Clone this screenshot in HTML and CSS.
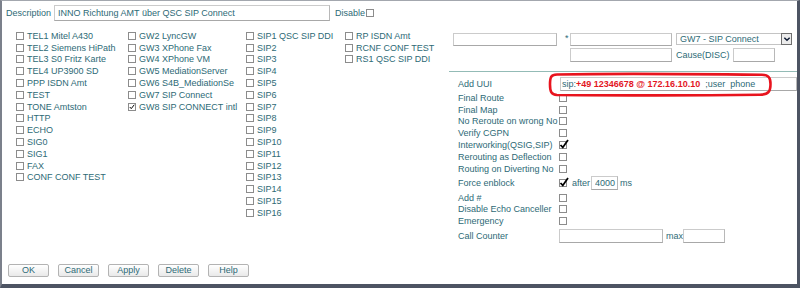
FILE: index.html
```html
<!DOCTYPE html>
<html lang="de">
<head>
    <meta charset="UTF-8">
    <title>Route</title>
    <link rel="stylesheet" href="styles.css">
</head>
<body>
    <div class="frame">
        <div class="desc-row">
            <span>Description</span>
            <input class="txt desc-input" value="INNO Richtung AMT über QSC SIP Connect">
            <span>Disable</span><span class="cb"></span>
        </div>

        <div class="main">
            <div class="gw-grid">
                <ul class="gw-col">
                    <li><span class="cb"></span>TEL1 Mitel A430</li>
                    <li><span class="cb"></span>TEL2 Siemens HiPath</li>
                    <li><span class="cb"></span>TEL3 S0 Fritz Karte</li>
                    <li><span class="cb"></span>TEL4 UP3900 SD</li>
                    <li><span class="cb"></span>PPP ISDN Amt</li>
                    <li><span class="cb"></span>TEST</li>
                    <li><span class="cb"></span>TONE Amtston</li>
                    <li><span class="cb"></span>HTTP</li>
                    <li><span class="cb"></span>ECHO</li>
                    <li><span class="cb"></span>SIG0</li>
                    <li><span class="cb"></span>SIG1</li>
                    <li><span class="cb"></span>FAX</li>
                    <li><span class="cb"></span>CONF CONF TEST</li>
                </ul>
                <ul class="gw-col">
                    <li><span class="cb"></span>GW2 LyncGW</li>
                    <li><span class="cb"></span>GW3 XPhone Fax</li>
                    <li><span class="cb"></span>GW4 XPhone VM</li>
                    <li><span class="cb"></span>GW5 MediationServer</li>
                    <li><span class="cb"></span>GW6 S4B_MediationSe</li>
                    <li><span class="cb"></span>GW7 SIP Connect</li>
                    <li><span class="cb small-on"><svg viewBox="0 0 8 8"><path d="M1 4 L3 6.2 L7 1"/></svg></span>GW8 SIP CONNECT intl</li>
                </ul>
                <ul class="gw-col">
                    <li><span class="cb"></span>SIP1 QSC SIP DDI</li>
                    <li><span class="cb"></span>SIP2</li>
                    <li><span class="cb"></span>SIP3</li>
                    <li><span class="cb"></span>SIP4</li>
                    <li><span class="cb"></span>SIP5</li>
                    <li><span class="cb"></span>SIP6</li>
                    <li><span class="cb"></span>SIP7</li>
                    <li><span class="cb"></span>SIP8</li>
                    <li><span class="cb"></span>SIP9</li>
                    <li><span class="cb"></span>SIP10</li>
                    <li><span class="cb"></span>SIP11</li>
                    <li><span class="cb"></span>SIP12</li>
                    <li><span class="cb"></span>SIP13</li>
                    <li><span class="cb"></span>SIP14</li>
                    <li><span class="cb"></span>SIP15</li>
                    <li><span class="cb"></span>SIP16</li>
                </ul>
                <ul class="gw-col">
                    <li><span class="cb"></span>RP ISDN Amt</li>
                    <li><span class="cb"></span>RCNF CONF TEST</li>
                    <li><span class="cb"></span>RS1 QSC SIP DDI</li>
                </ul>
            </div>

            <div class="panel">
                <div class="top-row1">
                    <input class="txt num-a">
                    <span class="star">*</span>
                    <input class="txt num-b">
                    <div class="sel">
                        <span>GW7 - SIP Connect</span>
                        <span class="sel-btn"><svg viewBox="0 0 9 9"><path d="M1.5 3 L4.5 6 L7.5 3"/></svg></span>
                    </div>
                </div>
                <div class="top-row2">
                    <input class="txt num-b">
                    <span class="cause">Cause(DISC)</span>
                    <input class="txt cause-in">
                </div>
                <div class="divider"></div>

                <div class="form">
                    <div class="frow uui-row">
                        <span class="lbl">Add UUI</span>
                        <div class="txt uui">sip:<b>+49 12346678 @ 172.16.10.10</b>&nbsp; ;user&nbsp; phone</div>
                    </div>
                    <div class="frow"><span class="lbl">Final Route</span><span class="cb"></span></div>
                    <div class="frow"><span class="lbl">Final Map</span><span class="cb"></span></div>
                    <div class="frow"><span class="lbl">No Reroute on wrong No</span><span class="cb"></span></div>
                    <div class="frow"><span class="lbl">Verify CGPN</span><span class="cb"></span></div>
                    <div class="frow"><span class="lbl">Interworking(QSIG,SIP)</span><span class="cb big-on"><svg viewBox="0 0 10 10"><path d="M1.5 6 L3.8 8.4 L9 1"/></svg></span></div>
                    <div class="frow"><span class="lbl">Rerouting as Deflection</span><span class="cb"></span></div>
                    <div class="frow"><span class="lbl">Routing on Diverting No</span><span class="cb"></span></div>
                    <div class="frow force-row">
                        <span class="lbl">Force enblock</span><span class="cb big-on"><svg viewBox="0 0 10 10"><path d="M1.5 6 L3.8 8.4 L9 1"/></svg></span>
                        <span class="after">after</span><input class="txt ms-in" value="4000"><span class="ms">ms</span>
                    </div>
                    <div class="frow"><span class="lbl">Add #</span><span class="cb"></span></div>
                    <div class="frow"><span class="lbl">Disable Echo Canceller</span><span class="cb"></span></div>
                    <div class="frow"><span class="lbl">Emergency</span><span class="cb"></span></div>
                    <div class="frow count-row">
                        <span class="lbl">Call Counter</span><input class="txt count-in"><span class="max">max</span><input class="txt max-in">
                    </div>
                </div>
            </div>
        </div>

        <div class="btns">
            <button class="btn">OK</button>
            <button class="btn">Cancel</button>
            <button class="btn">Apply</button>
            <button class="btn">Delete</button>
            <button class="btn">Help</button>
        </div>

        <!-- red marker drawn over the UUI field -->
        <svg class="mark" width="226" height="26" viewBox="0 0 226 26">
            <path d="M9 2.5 C60 1.5 150 2 214 2.8 C221 3 222.5 6 222.5 12 C222.5 19 221 22.5 212 22.8 C150 23.6 60 23.4 9 23 C3 22.8 2 19 2 12.5 C2 5 3 2.6 9 2.5 Z"/>
        </svg>
    </div>
</body>
</html>
```

FILE: styles.css
```css
*{
    margin:0;
    padding:0;
    box-sizing:border-box;
}
body{
    background:#fff;
    font-family:"Liberation Sans", Arial, sans-serif;
    font-size:9px;
    color:#2d6a76;
}
.frame{
    position:relative;
    width:800px;
    height:288px;
    border-left:2px solid #7b808b;
    border-top:1px solid #a3a7ae;
    border-right:3px solid #4d5463;
    border-bottom:4px solid #4d5463;
    display:flex;
    flex-direction:column;
}
.txt{
    border:1px solid #cbcbcb;
    border-bottom-color:#a8a8a8;
    border-right-color:#b8b8b8;
    background:#fff;
    font:inherit;
    color:inherit;
    outline:none;
}
.cb{
    position:relative;
    display:inline-block;
    flex:none;
    width:8px;
    height:8px;
    border:1px solid #8c8c8c;
    background:#fff;
}
.cb svg{
    position:absolute;
    fill:none;
    stroke:#000;
}
.small-on svg{
    left:0;
    top:0;
    width:6px;
    height:6px;
    stroke-width:1.3;
}
.big-on svg{
    left:-1px;
    top:-3px;
    width:10px;
    height:10px;
    stroke-width:1.8;
}

/* description */
.desc-row{
    display:flex;
    align-items:center;
    height:16px;
    margin-top:4px;
    padding-left:4px;
    white-space:nowrap;
}
.desc-input{
    width:276px;
    height:16px;
    margin:0 5px 0 3px;
    padding-left:3px;
}
.desc-row .cb{
    margin-left:1px;
}

/* gateway checkboxes */
.main{
    display:flex;
    margin-top:9px;
}
.gw-grid{
    width:446px;
    flex:none;
    display:grid;
    grid-template-columns:112px 118px 99px 1fr;
    align-items:start;
    padding-left:14px;
}
.gw-col{
    list-style:none;
}
.gw-col li{
    display:flex;
    align-items:center;
    gap:3px;
    height:11.8px;
    white-space:nowrap;
}

/* right panel */
.panel{
    flex:1;
    padding-top:3px;
}
.top-row1,
.top-row2{
    display:flex;
    align-items:flex-start;
    padding-left:5px;
    white-space:nowrap;
}
.num-a{
    width:104px;
    height:13px;
}
.star{
    width:13px;
    padding-left:8px;
    line-height:11px;
}
.num-b{
    width:102px;
    height:14px;
}
.top-row1 .num-b{
    height:13px;
}
.sel{
    display:flex;
    align-items:center;
    width:116px;
    height:12px;
    margin-left:4px;
    padding-left:3px;
    border:1px solid #c4c4c4;
}
.sel-btn{
    margin-left:auto;
    width:11px;
    height:12px;
    margin-right:-1px;
    border:1px solid #6f6f6f;
    background:#ececec;
    display:flex;
    align-items:center;
    justify-content:center;
}
.sel-btn svg{
    width:8px;
    height:8px;
    fill:none;
    stroke:#0d1a33;
    stroke-width:1.6;
}
.top-row2{
    margin-top:2px;
    padding-left:122px;
    align-items:center;
}
.cause{
    margin:0 4px 0 4px;
    width:53px;
}
.cause-in{
    width:42px;
    height:14px;
}
.divider{
    height:1px;
    margin:9px 0 0 1px;
    background:#93bbb6;
}
.form{
    margin-top:4px;
}
.frow{
    display:flex;
    align-items:center;
    height:11.8px;
    padding-left:10px;
    white-space:nowrap;
}
.frow .lbl{
    width:101px;
    flex:none;
}
.uui-row{
    height:16px;
}
.uui{
    flex:1;
    height:14px;
    margin-left:1px;
    padding-left:1px;
    line-height:12px;
}
.uui b{
    color:#e3161f;
}
.force-row{
    height:17.2px;
}
.after{
    margin:0 1px 0 5px;
}
.ms-in{
    width:27px;
    height:14px;
    padding-left:3px;
}
.ms{
    margin-left:2px;
}
.count-row{
    height:17.6px;
}
.count-in{
    width:104px;
    height:14px;
}
.max{
    margin-left:3px;
}
.max-in{
    width:42px;
    height:14px;
}

/* buttons */
.btns{
    margin-top:auto;
    display:flex;
    gap:9px;
    padding:0 0 7px 6px;
}
.btn{
    width:41px;
    height:13px;
    border:1px solid #b3b3b3;
    border-radius:2px;
    background:linear-gradient(#fff, #e9e9e9);
    font:inherit;
    color:inherit;
    line-height:11px;
}

.mark{
    position:absolute;
    left:546px;
    top:71px;
}
.mark path{
    fill:none;
    stroke:#e8141e;
    stroke-width:2.6;
}
```
